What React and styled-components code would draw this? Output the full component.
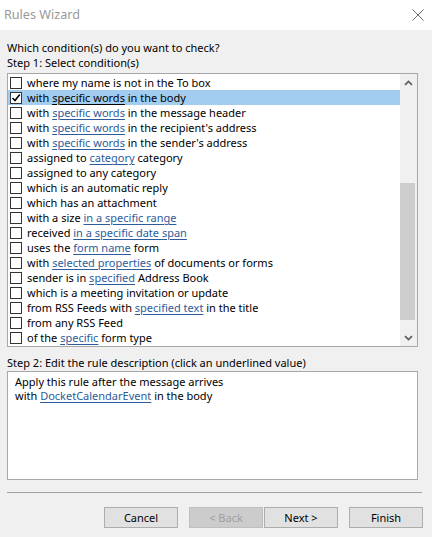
import React from "react";
import styled, { createGlobalStyle } from "styled-components";

const Global = createGlobalStyle`
  html, body { margin: 0; padding: 0; background: #f0f0f0; }
  body { font-family: "Noto Sans", "Open Sans", sans-serif; }
`;

const Window = styled.div`
  width: 432px;
  height: 537px;
  background: #f0f0f0;
  display: flex;
  flex-direction: column;
  font-family: "Noto Sans", sans-serif;
  font-size: 11px;
  color: #000;
  overflow: hidden;
`;

const TitleBar = styled.div`
  height: 30px;
  background: #fff;
  display: flex;
  align-items: center;
  justify-content: space-between;
  padding: 0 8px 0 4px;
  flex: none;
`;

const Title = styled.div`
  font-size: 12.6px;
  color: #999;
  margin-top: -1px;
`;

const Body = styled.div`
  padding: 10px 10px 0 7px;
  display: flex;
  flex-direction: column;
`;

const Label = styled.div`
  line-height: 15px;
  height: 15px;
  white-space: nowrap;
  margin-top: ${(p) => p.$mt || 0}px;
`;

const ListBox = styled.div`
  margin-top: 3px;
  width: 411px;
  height: 274px;
  box-sizing: border-box;
  border: 1px solid #a8a8a8;
  background: #fff;
  display: flex;
`;

const Rows = styled.div`
  flex: 1;
  padding-top: 1px;
  display: flex;
  flex-direction: column;
`;

const Row = styled.div`
  height: 15px;
  display: flex;
  align-items: center;
  padding-left: 2px;
  background: ${(p) => (p.$selected ? "#a2cdf0" : "transparent")};
  white-space: nowrap;
`;

const Check = styled.span`
  width: 12px;
  height: 12px;
  box-sizing: border-box;
  border: 1px solid #333;
  background: #fff;
  flex: none;
  margin-right: 5px;
  display: flex;
  align-items: center;
  justify-content: center;
`;

const Link = styled.span`
  color: ${(p) => (p.$plain ? "#000" : "#2e5c9a")};
  text-decoration: underline;
  text-underline-offset: 2px;
`;

const ScrollBar = styled.div`
  width: 17px;
  background: #f0f0f0;
  display: flex;
  flex-direction: column;
  flex: none;
`;

const Arrow = styled.div`
  height: 17px;
  display: flex;
  align-items: center;
  justify-content: center;
  flex: none;
`;

const Track = styled.div`
  flex: 1;
  display: flex;
  flex-direction: column;
`;

const Thumb = styled.div`
  margin-top: 92px;
  height: 137px;
  width: 15px;
  background: #cdcdcd;
`;

const DescBox = styled.div`
  margin-top: 1px;
  width: 411px;
  height: 109px;
  box-sizing: border-box;
  border: 1px solid #a8a8a8;
  background: #fff;
  padding: 3px 7px;
`;

const DescLine = styled.div`
  line-height: 14px;
  height: 14px;
  white-space: nowrap;
`;

const Separator = styled.div`
  margin-top: 12px;
  width: 415px;
  height: 1px;
  background: #a0a0a0;
`;

const Buttons = styled.div`
  margin-top: 14px;
  display: flex;
  justify-content: flex-end;
  width: 416px;
`;

const Button = styled.div`
  width: 74px;
  height: 21px;
  box-sizing: border-box;
  border: 1px solid ${(p) => (p.$disabled ? "#bfbfbf" : "#adadad")};
  background: ${(p) => (p.$disabled ? "#cccccc" : "#e1e1e1")};
  color: ${(p) => (p.$disabled ? "#a0a0a0" : "#000")};
  display: flex;
  align-items: center;
  justify-content: center;
  margin-left: ${(p) => p.$ml}px;
  line-height: 1;
`;

const CheckMark = () => (
  <svg width="10" height="10" viewBox="0 0 10 10">
    <path d="M1.5 5 L4 7.5 L8.8 1.5" fill="none" stroke="#000" strokeWidth="1.6" />
  </svg>
);

const Chevron = ({ down }) => (
  <svg width="9" height="6" viewBox="0 0 9 6">
    <path
      d={down ? "M1 1.2 L4.5 4.6 L8 1.2" : "M1 4.8 L4.5 1.4 L8 4.8"}
      fill="none"
      stroke="#606060"
      strokeWidth="1.8"
    />
  </svg>
);

const rows = [
  ["where my name is not in the To box"],
  ["with ", { l: "specific words", plain: true }, " in the body"],
  ["with ", { l: "specific words" }, " in the message header"],
  ["with ", { l: "specific words" }, " in the recipient's address"],
  ["with ", { l: "specific words" }, " in the sender's address"],
  ["assigned to ", { l: "category" }, " category"],
  ["assigned to any category"],
  ["which is an automatic reply"],
  ["which has an attachment"],
  ["with a size ", { l: "in a specific range" }],
  ["received ", { l: "in a specific date span" }],
  ["uses the ", { l: "form name" }, " form"],
  ["with ", { l: "selected properties" }, " of documents or forms"],
  ["sender is in ", { l: "specified" }, " Address Book"],
  ["which is a meeting invitation or update"],
  ["from RSS Feeds with ", { l: "specified text" }, " in the title"],
  ["from any RSS Feed"],
  ["of the ", { l: "specific" }, " form type"],
];

const renderParts = (parts) =>
  parts.map((p, i) =>
    typeof p === "string" ? (
      <span key={i}>{p}</span>
    ) : (
      <Link key={i} $plain={p.plain}>
        {p.l}
      </Link>
    )
  );

export default function App() {
  return (
    <Window>
      <Global />
      <TitleBar>
        <Title>Rules Wizard</Title>
        <svg width="12" height="12" viewBox="0 0 12 12">
          <path d="M0.5 0.5 L11.5 11.5 M11.5 0.5 L0.5 11.5" stroke="#6d6d6d" strokeWidth="1" />
        </svg>
      </TitleBar>
      <Body>
        <Label>Which condition(s) do you want to check?</Label>
        <Label>Step 1: Select condition(s)</Label>
        <ListBox>
          <Rows>
            {rows.map((r, i) => (
              <Row key={i} $selected={i === 1}>
                <Check>{i === 1 && <CheckMark />}</Check>
                <span>{renderParts(r)}</span>
              </Row>
            ))}
          </Rows>
          <ScrollBar>
            <Arrow>
              <Chevron />
            </Arrow>
            <Track>
              <Thumb />
            </Track>
            <Arrow>
              <Chevron down />
            </Arrow>
          </ScrollBar>
        </ListBox>
        <Label $mt={8}>Step 2: Edit the rule description (click an underlined value)</Label>
        <DescBox>
          <DescLine>Apply this rule after the message arrives</DescLine>
          <DescLine>
            with <Link>DocketCalendarEvent</Link> in the body
          </DescLine>
        </DescBox>
        <Separator />
        <Buttons>
          <Button $ml={0}>Cancel</Button>
          <Button $ml={11} $disabled>
            &lt; Back
          </Button>
          <Button $ml={1}>Next &gt;</Button>
          <Button $ml={11}>Finish</Button>
        </Buttons>
      </Body>
    </Window>
  );
}
